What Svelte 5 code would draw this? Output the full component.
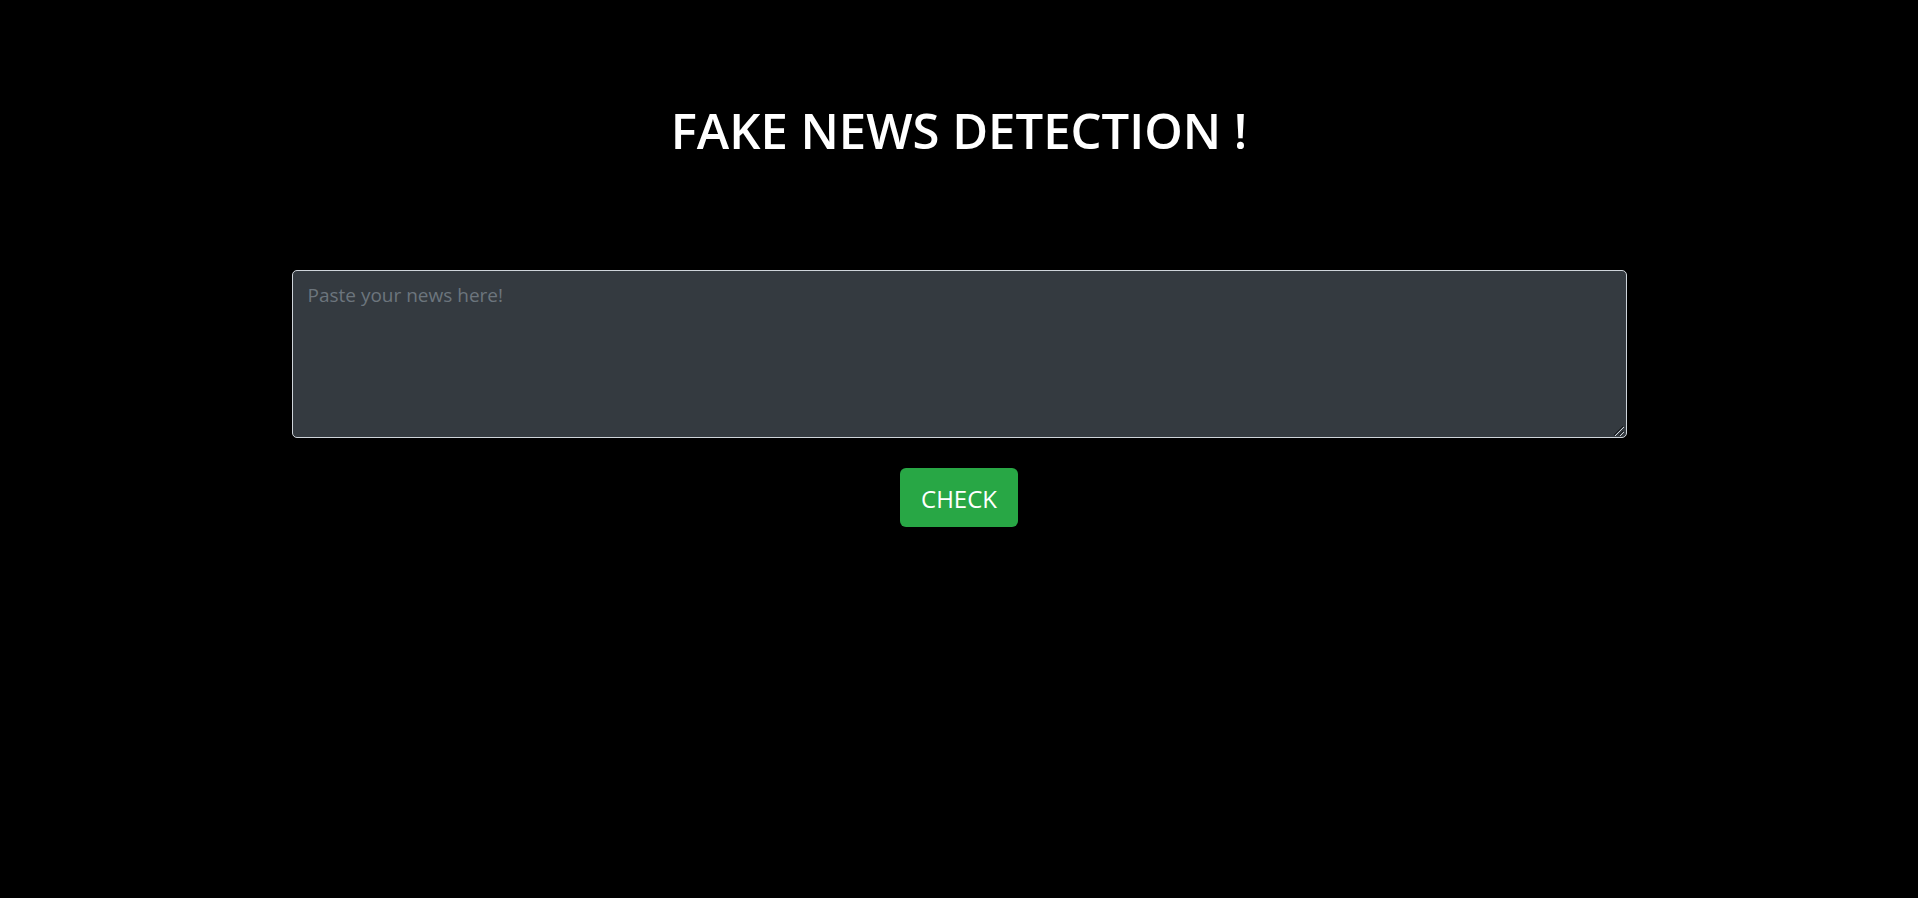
<script>
  let news = $state('');
</script>

<main>
  <h1>FAKE NEWS DETECTION !</h1>
  <form onsubmit={(event) => event.preventDefault()}>
    <textarea bind:value={news} aria-label="News text" placeholder="Paste your news here!"></textarea>
    <button type="submit">CHECK</button>
  </form>
</main>

<style>
  :global(body) {
    background: #000;
  }

  main {
    box-sizing: border-box;
    max-width: 1335px;
    margin: 0 auto;
    padding-top: 100px;
    font-family: "Segoe UI", "Open Sans", sans-serif;
  }

  h1 {
    margin: 0 0 110px;
    color: #fff;
    font-size: 49px;
    font-weight: 600;
    line-height: 60px;
    text-align: center;
  }

  form {
    display: flex;
    flex-direction: column;
    align-items: center;
    gap: 30px;
  }

  textarea {
    box-sizing: border-box;
    display: block;
    width: 100%;
    height: 168px;
    padding: 9px 15px;
    border: 1px solid #ced4da;
    border-radius: 5px;
    background: #343a40;
    color: #fff;
    font-family: inherit;
    font-size: 19px;
    line-height: 30px;
    resize: vertical;
  }

  textarea::placeholder {
    color: #6c757d;
    opacity: 1;
  }

  textarea::-webkit-resizer {
    background: url("data:image/svg+xml,%3Csvg xmlns='http://www.w3.org/2000/svg' width='15' height='15' viewBox='0 0 15 15' fill='none'%3E%3Cpath d='M3 13L12 4M8 13L12 9' stroke='%2315181b'/%3E%3Cpath d='M4 14L13 5M9 14L13 10' stroke='%23ced4da'/%3E%3C/svg%3E") right bottom no-repeat;
  }

  button {
    padding: 12px 21px 10px;
    border: 0;
    border-radius: 6px;
    background: #28a745;
    color: #fff;
    font-family: inherit;
    font-size: 24px;
    line-height: 37px;
    cursor: pointer;
  }
</style>
